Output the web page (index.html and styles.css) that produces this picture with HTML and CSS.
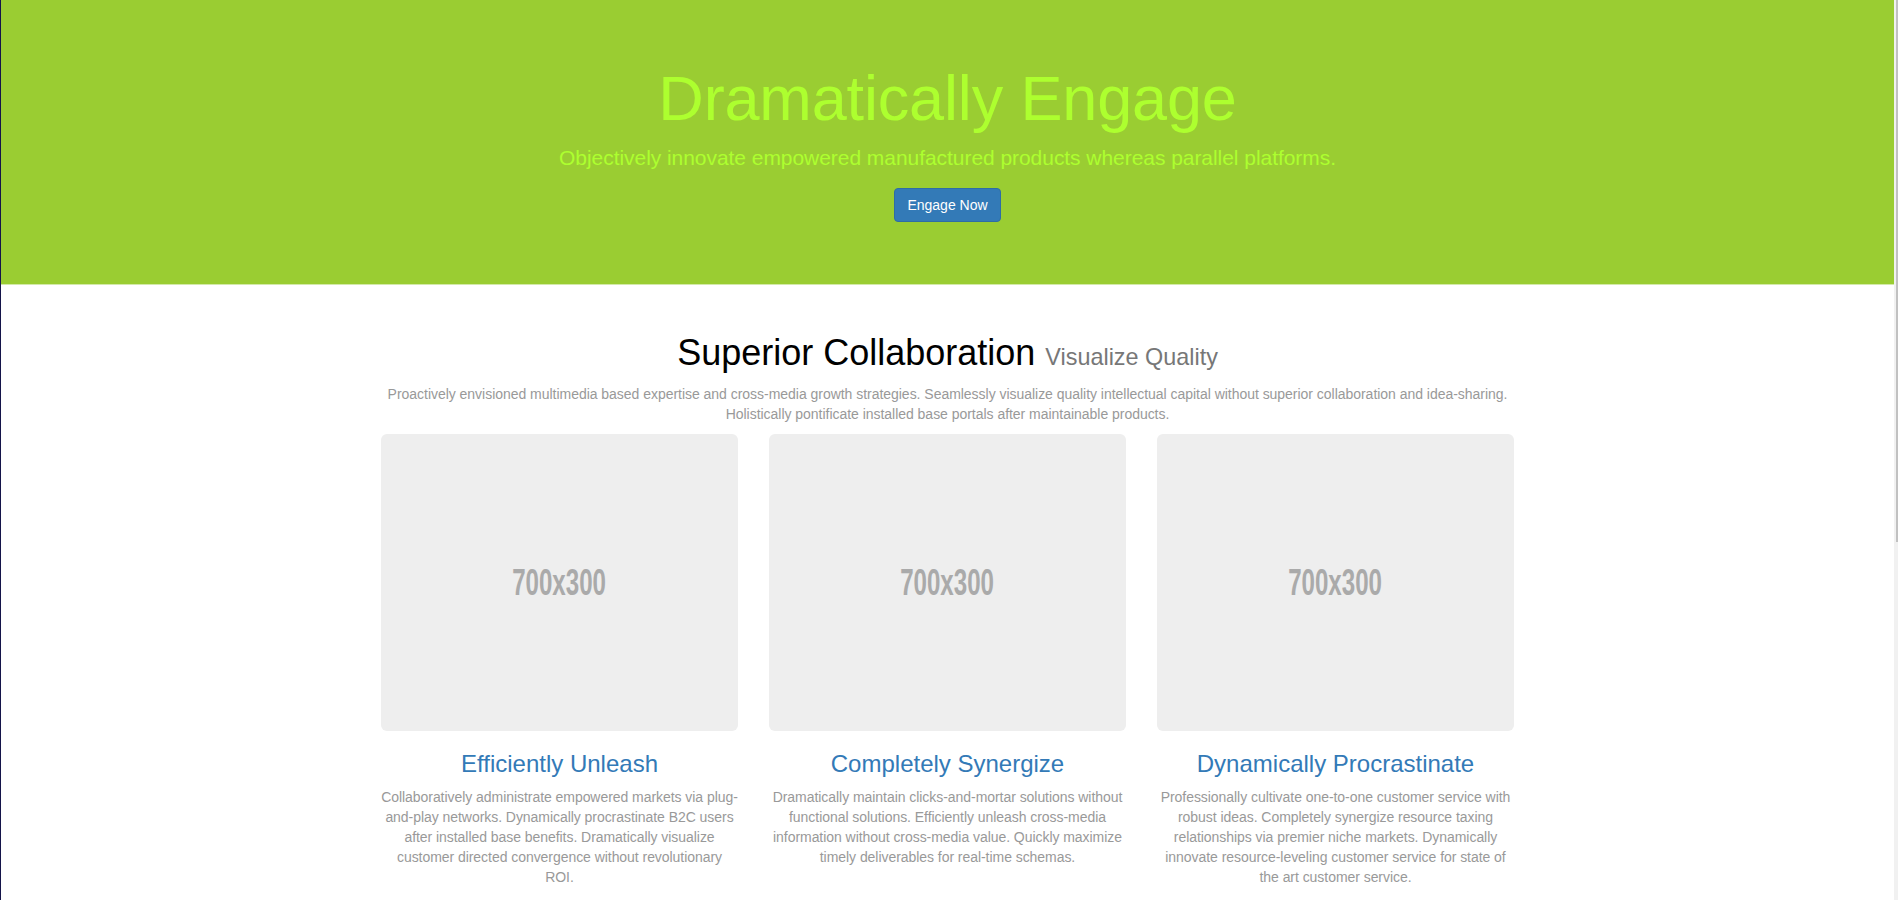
FILE: index.html
```html
<!DOCTYPE html>
<html lang="en">
<head>
<meta charset="utf-8">
<title>Dramatically Engage</title>
<link rel="stylesheet" href="styles.css">
</head>
<body>
<header class="hero">
  <h1 class="hero-title">Dramatically Engage</h1>
  <p class="hero-lead">Objectively innovate empowered manufactured products whereas parallel platforms.</p>
  <a class="btn" href="#">Engage Now</a>
</header>
<main class="content">
  <h2 class="section-title">Superior Collaboration <small>Visualize Quality</small></h2>
  <p class="section-lead">Proactively envisioned multimedia based expertise and cross-media growth strategies. Seamlessly visualize quality intellectual capital without superior collaboration and idea-sharing. Holistically pontificate installed base portals after maintainable products.</p>
  <div class="cards">
    <div class="card">
      <div class="placeholder"><span>700x300</span></div>
      <h3 class="card-title">Efficiently Unleash</h3>
      <p class="card-text">Collaboratively administrate empowered markets via plug-and-play networks. Dynamically procrastinate B2C users after installed base benefits. Dramatically visualize customer directed convergence without revolutionary ROI.</p>
    </div>
    <div class="card">
      <div class="placeholder"><span>700x300</span></div>
      <h3 class="card-title">Completely Synergize</h3>
      <p class="card-text">Dramatically maintain clicks-and-mortar solutions without functional solutions. Efficiently unleash cross-media information without cross-media value. Quickly maximize timely deliverables for real-time schemas.</p>
    </div>
    <div class="card">
      <div class="placeholder"><span>700x300</span></div>
      <h3 class="card-title">Dynamically Procrastinate</h3>
      <p class="card-text">Professionally cultivate one-to-one customer service with robust ideas. Completely synergize resource taxing relationships via premier niche markets. Dynamically innovate resource-leveling customer service for state of the art customer service.</p>
    </div>
  </div>
</main>
</body>
</html>
```
FILE: styles.css
```css
html {
  background: #f1f1f1;
}
/* scrollbar thumb seen at the right edge of the window */
html::after {
  content: "";
  position: fixed;
  top: 0;
  right: 0;
  width: 2px;
  height: 542px;
  background: #c1c1c1;
}
body {
  margin: 0 4px 0 0;
  border-left: 1px solid #14144a;
  min-height: 1494px;
  box-sizing: border-box;
  font-family: "Liberation Sans", Arial, Helvetica, sans-serif;
  background: #fff;
}
.hero {
  background: #9acd32;
  border-bottom: 1px solid #d3eaa9;
  padding: 63px 0 62px;
  display: flex;
  flex-direction: column;
  align-items: center;
  text-align: center;
}
.hero-title {
  margin: 0 0 10px;
  font-size: 63px;
  line-height: 70px;
  font-weight: normal;
  letter-spacing: -0.15px;
  color: #adff2f;
}
.hero-lead {
  margin: 0 0 15px;
  font-size: 21px;
  line-height: 30px;
  letter-spacing: -0.05px;
  color: #adff2f;
}
.btn {
  display: inline-block;
  padding: 6px 12px;
  font-size: 14px;
  line-height: 20px;
  color: #fff;
  background: #337ab7;
  border: 1px solid #2e6da4;
  border-radius: 4px;
  text-decoration: none;
}
.content {
  width: 1133px;
  margin: 0 auto;
  padding-top: 48px;
}
.section-title {
  margin: 0 0 11px;
  font-size: 36px;
  line-height: 40px;
  font-weight: normal;
  color: #000;
  text-align: center;
}
.section-title small {
  font-size: 65%;
  line-height: 1;
  color: #777;
}
.section-lead {
  margin: 0 0 10px;
  font-size: 14px;
  line-height: 20px;
  letter-spacing: -0.03px;
  color: #999;
  text-align: center;
}
.cards {
  display: grid;
  grid-template-columns: repeat(3, 357px);
  column-gap: 31px;
}
.placeholder {
  height: 297px;
  background: #eee;
  border-radius: 6px;
  display: flex;
  align-items: center;
  justify-content: center;
}
.placeholder span {
  font-size: 36px;
  line-height: 1;
  font-weight: bold;
  color: #aaa;
  transform: scaleX(0.67);
}
.card-title {
  margin: 20px 0 10px;
  font-size: 24px;
  line-height: 26px;
  font-weight: normal;
  color: #337ab7;
  text-align: center;
}
.card-text {
  margin: 0;
  font-size: 14px;
  line-height: 20px;
  letter-spacing: -0.05px;
  color: #999;
  text-align: center;
}
```
